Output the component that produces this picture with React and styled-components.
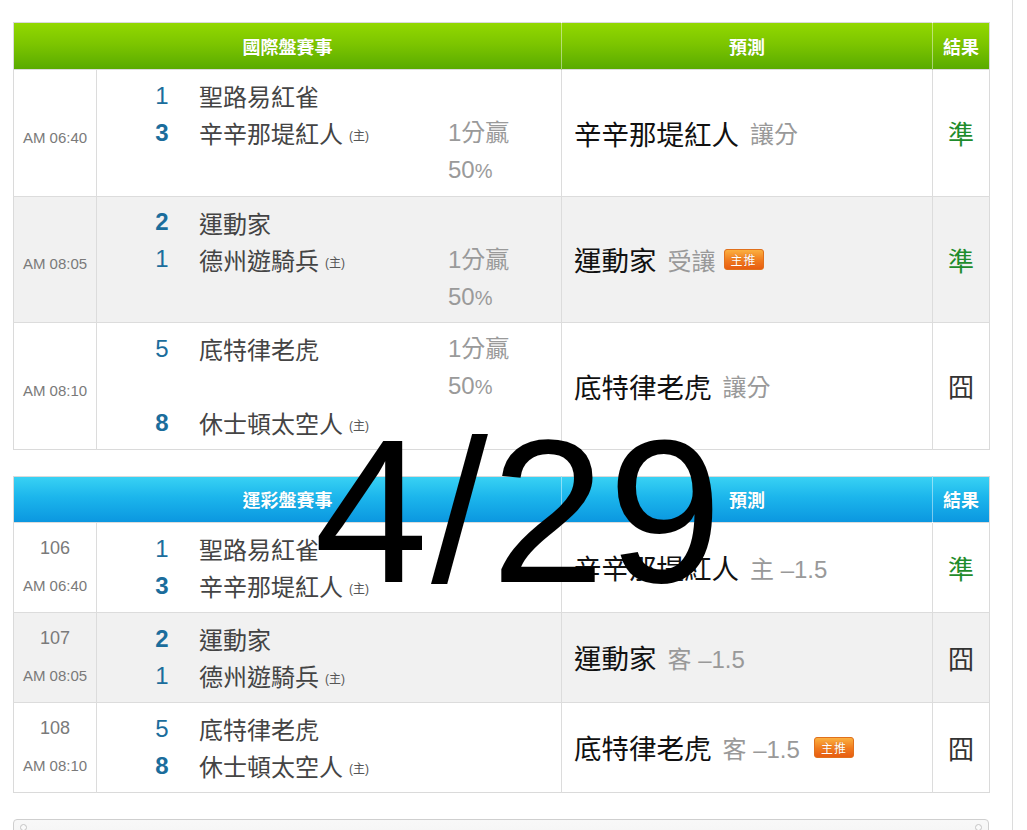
import React from "react";
import styled, { createGlobalStyle, css } from "styled-components";

const Global = createGlobalStyle`
  html, body { margin: 0; padding: 0; background: #fff; }
  body { font-family: "Liberation Sans", "Noto Sans CJK TC", sans-serif; }
`;

const Page = styled.div`
  position: relative;
  width: 976px;
  min-height: 830px;
  padding: 22px 23px 0 13px;
  border-right: 1px solid #dcdcdc;
  display: flex;
  flex-direction: column;
  gap: 26px;
  overflow: hidden;
`;

const Table = styled.table`
  width: 976px;
  border-collapse: collapse;
  table-layout: fixed;
  border: 1px solid #dadada;
`;

const themes = {
  green: css`
    background: linear-gradient(#92d800, #7cc500 45%, #58aa00);
  `,
  blue: css`
    background: linear-gradient(#3ad3f4, #1cb6ec 45%, #0b97e0);
  `,
};

const HeadRow = styled.tr`
  ${(p) => themes[p.$theme]}
`;

const Th = styled.th`
  height: ${(p) => p.$h}px;
  padding: 0;
  color: #fff;
  font-size: 18px;
  font-weight: bold;
  text-align: center;
  text-shadow: 0 0 1px rgba(0, 0, 0, 0.15);
  border-left: 1px solid rgba(255, 255, 255, 0.45);
  &:first-child { border-left: none; }
`;

const Row = styled.tr`
  background: ${(p) => (p.$alt ? "#f1f1f1" : "#fff")};
  border-top: 1px solid #dcdcdc;
`;

const Td = styled.td`
  padding: ${(p) => p.$pad}px 0;
  border-left: 1px solid #dcdcdc;
  vertical-align: middle;
  &:first-child { border-left: none; }
`;

const TimeBox = styled.div`
  display: flex;
  flex-direction: column;
  align-items: center;
  color: #7a7a7a;
  padding-top: ${(p) => p.$shift}px;
`;

const GameNo = styled.div`
  font-size: 18px;
  line-height: 37px;
`;

const Time = styled.div`
  font-size: 15px;
  line-height: 37px;
`;

const TeamGrid = styled.div`
  display: grid;
  grid-template-columns: 26px 273px auto;
  grid-auto-rows: 37px;
  padding-left: 52px;
  align-items: center;
`;

const Num = styled.div`
  grid-column: 1;
  grid-row: ${(p) => p.$row};
  text-align: center;
  font-size: 24px;
  color: #1b6d9c;
  font-weight: ${(p) => (p.$bold ? "bold" : "normal")};
`;

const Name = styled.div`
  grid-column: 2;
  grid-row: ${(p) => p.$row};
  padding-left: 24px;
  font-size: 24px;
  color: #444;
  white-space: nowrap;
`;

const Home = styled.span`
  font-size: 12px;
  color: #555;
  margin-left: 6px;
  vertical-align: 3px;
`;

const Extra = styled.div`
  grid-column: 3;
  grid-row: ${(p) => p.$row} / span 2;
  align-self: stretch;
  display: flex;
  flex-direction: column;
  color: #9a9a9a;
  font-size: 24px;
  line-height: 37px;
`;

const Pct = styled.span`
  font-size: 20px;
`;

const Pred = styled.div`
  display: flex;
  align-items: center;
  padding-left: 12px;
  white-space: nowrap;
`;

const PredTeam = styled.span`
  font-size: 27.5px;
  color: #111;
`;

const PredNote = styled.span`
  font-size: 24px;
  color: #999;
  margin-left: 11px;
`;

const Badge = styled.span`
  display: inline-flex;
  align-items: center;
  justify-content: center;
  margin-left: ${(p) => p.$gap}px;
  width: 40px;
  height: 21px;
  border-radius: 3px;
  background: linear-gradient(#fbb040, #f07a1e 55%, #e85d12);
  border: 1px solid #e0701c;
  box-sizing: border-box;
  color: #fff;
  font-size: 12px;
  letter-spacing: 1px;
  text-shadow: 0 0 1px rgba(160, 60, 0, 0.6);
`;

const Result = styled.div`
  text-align: center;
  font-size: 26px;
  color: ${(p) => (p.$hit ? "#1f8c2c" : "#333")};
`;

const Footer = styled.div`
  height: 40px;
  border: 1px solid #cfcfcf;
  border-radius: 4px;
  background: linear-gradient(#f8f8f8, #efefef);
  display: flex;
  justify-content: space-between;
  padding: 4px 6px;
`;

const Rivet = styled.span`
  width: 5px;
  height: 5px;
  border-radius: 50%;
  border: 1px solid #c4c4c4;
  background: #fafafa;
`;

const Stamp = styled.div`
  position: absolute;
  left: 314px;
  top: 408px;
  font-family: "Liberation Sans", sans-serif;
  font-size: 205px;
  letter-spacing: 3px;
  line-height: 1;
  color: #000;
  pointer-events: none;
`;

const intl = [
  {
    time: "AM 06:40",
    teams: [
      { n: 1, name: "聖路易紅雀", row: 1 },
      { n: 3, name: "辛辛那堤紅人", row: 2, home: true, bold: true },
    ],
    extraRow: 2,
    pred: "辛辛那堤紅人",
    note: "讓分",
    hit: true,
  },
  {
    time: "AM 08:05",
    alt: true,
    teams: [
      { n: 2, name: "運動家", row: 1, bold: true },
      { n: 1, name: "德州遊騎兵", row: 2, home: true },
    ],
    extraRow: 2,
    pred: "運動家",
    note: "受讓",
    badge: true,
    hit: true,
  },
  {
    time: "AM 08:10",
    teams: [
      { n: 5, name: "底特律老虎", row: 1 },
      { n: 8, name: "休士頓太空人", row: 3, home: true, bold: true },
    ],
    extraRow: 1,
    pred: "底特律老虎",
    note: "讓分",
    hit: false,
  },
];

const sports = [
  {
    no: "106",
    time: "AM 06:40",
    teams: [
      { n: 1, name: "聖路易紅雀", row: 1 },
      { n: 3, name: "辛辛那堤紅人", row: 2, home: true, bold: true },
    ],
    pred: "辛辛那堤紅人",
    note: "主 –1.5",
    hit: true,
  },
  {
    no: "107",
    time: "AM 08:05",
    alt: true,
    teams: [
      { n: 2, name: "運動家", row: 1, bold: true },
      { n: 1, name: "德州遊騎兵", row: 2, home: true },
    ],
    pred: "運動家",
    note: "客 –1.5",
    hit: false,
  },
  {
    no: "108",
    time: "AM 08:10",
    teams: [
      { n: 5, name: "底特律老虎", row: 1 },
      { n: 8, name: "休士頓太空人", row: 2, home: true, bold: true },
    ],
    pred: "底特律老虎",
    note: "客 –1.5",
    badge: true,
    hit: false,
  },
];

function Cols() {
  return (
    <colgroup>
      <col style={{ width: 83 }} />
      <col style={{ width: 465 }} />
      <col style={{ width: 371 }} />
      <col style={{ width: 57 }} />
    </colgroup>
  );
}

function Teams({ teams, extraRow }) {
  return (
    <TeamGrid>
      {teams.map((t) => (
        <React.Fragment key={t.name}>
          <Num $row={t.row} $bold={t.bold}>{t.n}</Num>
          <Name $row={t.row}>
            {t.name}
            {t.home && <Home>(主)</Home>}
          </Name>
        </React.Fragment>
      ))}
      {extraRow && (
        <Extra $row={extraRow}>
          <span>1分贏</span>
          <span>
            50<Pct>%</Pct>
          </span>
        </Extra>
      )}
    </TeamGrid>
  );
}

function Section({ theme, title, rows, pad, badgeGap, timeShift, headH }) {
  return (
    <Table>
      <Cols />
      <thead>
        <HeadRow $theme={theme}>
          <Th $h={headH} colSpan={2}>{title}</Th>
          <Th $h={headH}>預測</Th>
          <Th $h={headH}>結果</Th>
        </HeadRow>
      </thead>
      <tbody>
        {rows.map((r, i) => (
          <Row key={i} $alt={r.alt}>
            <Td $pad={pad}>
              <TimeBox $shift={timeShift}>
                {r.no && <GameNo>{r.no}</GameNo>}
                <Time>{r.time}</Time>
              </TimeBox>
            </Td>
            <Td $pad={pad}>
              <Teams teams={r.teams} extraRow={r.extraRow} />
            </Td>
            <Td $pad={pad}>
              <Pred>
                <PredTeam>{r.pred}</PredTeam>
                <PredNote>{r.note}</PredNote>
                {r.badge && <Badge $gap={badgeGap}>主推</Badge>}
              </Pred>
            </Td>
            <Td $pad={pad}>
              <Result $hit={r.hit}>{r.hit ? "準" : "囧"}</Result>
            </Td>
          </Row>
        ))}
      </tbody>
    </Table>
  );
}

export default function App() {
  return (
    <>
      <Global />
      <Page>
        <Section theme="green" title="國際盤賽事" rows={intl} pad={7.25} badgeGap={8} timeShift={9} headH={46} />
        <Section theme="blue" title="運彩盤賽事" rows={sports} pad={7.5} badgeGap={14} timeShift={0} headH={45} />
        <Footer>
          <Rivet />
          <Rivet />
        </Footer>
        <Stamp>4/29</Stamp>
      </Page>
    </>
  );
}
